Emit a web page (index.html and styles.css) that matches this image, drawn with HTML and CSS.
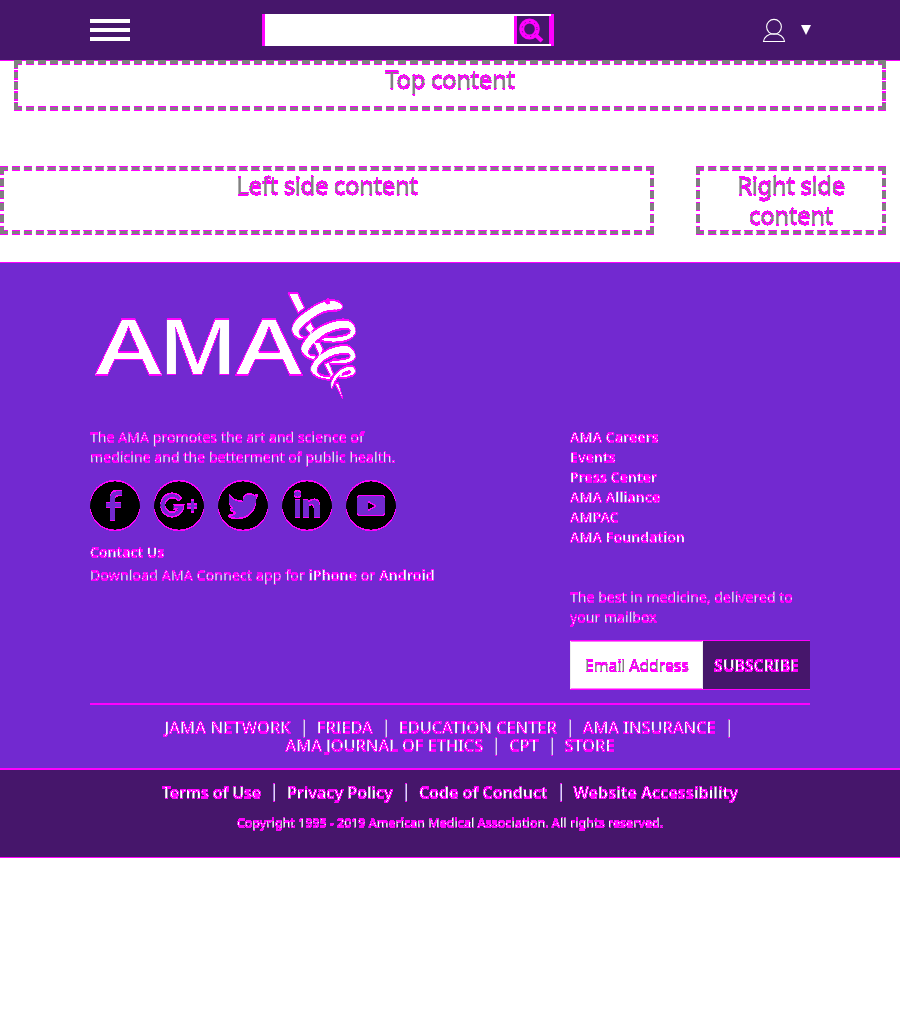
FILE: index.html
```html
<!DOCTYPE html>
<html lang="en">
<head>
<meta charset="utf-8">
<title>AMA</title>
<link rel="stylesheet" href="styles.css">
</head>
<body>
<svg class="defs" width="0" height="0" aria-hidden="true">
  <!-- Paints magenta wherever a pixel differs strongly from the one below it -->
  <filter id="edges" x="0" y="0" width="100%" height="100%" color-interpolation-filters="sRGB">
    <feOffset in="SourceGraphic" dy="-1" result="up"/>
    <feBlend in="SourceGraphic" in2="up" mode="difference" result="diff"/>
    <feColorMatrix in="diff" values="0 0 0 0 1  0 0 0 0 0  0 0 0 0 1  20 20 20 0 -3.5"  result="mark"/>
    <feMerge><feMergeNode in="SourceGraphic"/><feMergeNode in="mark"/></feMerge>
  </filter>
</svg>
<header class="header">
  <div class="burger"><span></span><span></span><span></span></div>
  <div class="search">
    <div class="search-button">
      <svg width="32" height="28" viewBox="0 0 32 28"><ellipse cx="12.500" cy="13" rx="7.800" ry="8" fill="none" stroke="#f0f" stroke-width="5"/><path d="M17.500 18l7.500 7" stroke="#f0f" stroke-width="4"/><circle cx="12.500" cy="13" r="7.500" fill="none" stroke="#46166b" stroke-width="1" stroke-dasharray="1 4"/></svg>
    </div>
  </div>
  <div class="user">
    <svg width="24" height="26" viewBox="0 0 24 26" fill="none" stroke="#fff" stroke-width="1.1"><circle cx="12" cy="8.8" r="7.4"/><path d="M1.500 23.500C2 19 6 15.800 12 15.800s10 3.200 10.500 7.700z"/></svg>
    <span class="caret"></span>
  </div>
</header>
<div class="page">
<main class="main">
  <div class="box top">Top content</div>
  <div class="row">
    <div class="box left">Left side content</div>
    <div class="box right">Right side content</div>
  </div>
</main>
<footer class="footer">
  <div class="inner">
    <svg class="logo" width="275" height="115" viewBox="90 288 275 115" fill="#fff">
      <text class="logo-text" y="375"><tspan x="95" textLength="67" lengthAdjust="spacingAndGlyphs">A</tspan><tspan x="159" textLength="78" lengthAdjust="spacingAndGlyphs">M</tspan><tspan x="235.500" textLength="67" lengthAdjust="spacingAndGlyphs">A</tspan></text>
      <g transform="translate(280 285.500) scale(.3333)" stroke="#fff" stroke-width="2">
        <path d="M25 24H52L73 68 55 84zM76 128L92 112 103 132 90 146zM102 174L118 170 130 196 118 210zM133 236L146 232 160 268 154 276zM166 296L174 294 187 338z"/>
        <path d="M186 68Q190 54 170 48 135 38 85 74 35 105 36 135 40 155 60 162L78 156Q62 158 56 142 58 130 95 101 130 75 165 76 182 76 186 68z"/>
        <path d="M226 140Q226 104 190 104 130 108 85 152 55 185 68 205 80 222 102 224L106 212Q90 214 84 202 90 180 125 155 165 128 205 132 216 136 208 145 185 160 135 155L120 166Q150 176 195 168 226 158 226 140z"/>
        <path d="M226 215Q222 180 190 180 150 184 115 212 88 240 94 260 104 280 150 284L152 274Q118 276 110 258 112 240 135 224 170 202 205 206 218 212 205 220 180 228 160 224L146 234Q175 240 205 234 226 226 226 215z"/>
        <path d="M155 310Q148 280 175 258 205 236 222 246 230 262 220 270 200 280 178 278L182 270Q205 270 214 260 205 254 190 264 165 280 160 300z"/>
        <circle cx="143" cy="49" r="6" fill="#f0f" stroke="#f0f"/>
      </g>
    </svg>
    <div class="columns">
      <div class="about">
        <p class="copy promo">The AMA promotes the art and science of<br>medicine and the betterment of public health.</p>
        <div class="social">
          <svg width="50" height="50"><circle cx="25" cy="25" r="25"/><path class="cut" d="M20 40V27h-4v-5h4v-4q0-8 7-8h5v5h-3q-4 0-4 3v4h6v5h-6v13z"/></svg>
          <svg width="50" height="50"><circle cx="25" cy="25" r="25"/><path d="M26 19a9.500 9.500 0 1 0 1.500 7.500h-8" fill="none" stroke="#7229d0" stroke-width="4.500"/><path class="cut" d="M33 23.500h4v-4h3v4h3v4h-3v4h-3v-4h-4z"/></svg>
          <svg width="50" height="50"><circle cx="25" cy="25" r="25"/><path class="cut" d="M11 14q5 7 14 7c-1-7 6-10 11-6l4-1-2 4c1 11-8 21-20 20q-5 0-8-3 5 0 8-3-5-1-6-4h3q-4-3-4-7z"/></svg>
          <svg width="50" height="50"><circle cx="25" cy="25" r="25"/><circle class="cut" cx="15.500" cy="13.500" r="3.500"/><path class="cut" d="M13 19h5v18h-5zM21 19h5v2q11-6 12 4v12h-6V27q-1-5-5-2v12h-6z"/></svg>
          <svg width="50" height="50"><circle cx="25" cy="25" r="25"/><rect class="cut" x="11" y="15" width="28" height="20" rx="3"/><path d="M22 21v9l8-4.500z"/></svg>
        </div>
        <p class="contact"><a>Contact Us</a></p>
        <p class="copy app">Download AMA Connect app for <a>iPhone</a> or <a>Android</a></p>
      </div>
      <div class="side">
        <ul class="links"><li><span>AMA Careers</span></li><li><span>Events</span></li><li><span>Press Center</span></li><li><span>AMA Alliance</span></li><li><span>AMPAC</span></li><li><span>AMA Foundation</span></li></ul>
        <p class="copy mail">The best in medicine, delivered to<br>your mailbox</p>
        <div class="subscribe"><div class="field">Email Address</div><div class="button">SUBSCRIBE</div></div>
      </div>
    </div>
    <div class="network">
      <div class="first"><span class="wide">JAMA NETWORK</span><i></i><span>FRIEDA</span><i></i><span>EDUCATION CENTER</span><i></i><span>AMA INSURANCE</span><i class="last"></i></div>
      <div><span>AMA JOURNAL OF ETHICS</span><i></i><span>CPT</span><i></i><span>STORE</span></div>
    </div>
  </div>
  <div class="legal">
    <div class="terms"><span class="tight">Terms of Use</span><i></i><span>Privacy Policy</span><i></i><span>Code of Conduct</span><i></i><span class="loose">Website Accessibility</span></div>
    <p class="copyright">Copyright 1995 - 2019 American Medical Association. All rights reserved.</p>
  </div>
</footer>
</div>
</body>
</html>
```
FILE: styles.css
```css
* { box-sizing: border-box; }
body { margin: 0; height: 1024px; overflow: hidden; background: #fff; font-family: "Noto Sans", "Open Sans", sans-serif; }
p, ul { margin: 0; padding: 0; list-style: none; }
.defs { position: absolute; }
.header { position: relative; z-index: 2; height: 60px; background: #46166b; display: flex; padding: 0 80px 0 90px; }
.header::after { content: ""; position: absolute; top: 60px; left: 0; width: 100%; height: 1px; background: linear-gradient(90deg, #f0f 14px, transparent 14px, transparent 886px, #f0f 886px), repeating-linear-gradient(90deg, #f0f 0 2px, #808080 2px 10px, #f0f 10px 12px); }
.burger { width: 40px; padding-top: 19px; display: flex; flex-direction: column; gap: 5px; }
.burger span { height: 4px; background: #fff; }
.search { flex: none; width: 292px; height: 32px; margin: 14px 0 0 132px; background: #fff; border: solid #f0f; border-width: 0 3px; display: flex; justify-content: flex-end; padding: 2px 0; }
.search-button { width: 37px; height: 28px; background: linear-gradient(#46166b, #46166b) content-box, #46166b; border: solid #f0f; border-width: 0 2px 0 3px; }
.user { margin: 18px 0 0 208px; display: flex; }
.caret { margin: 7px 0 0 15px; width: 0; height: 0; border: 5px solid transparent; border-top: 10px solid #fff; border-bottom: 0; }
.page { height: 1100px; filter: url(#edges); background: #fff; }
.main { height: 203px; padding-top: 1px; }
.box { border: 4px dashed #808080; color: #808080; font-size: 24px; line-height: 30px; text-align: center; letter-spacing: -.4px; -webkit-text-stroke: .3px #808080; }
.top { margin: 0 14px; height: 50px; }
.row { display: flex; justify-content: space-between; padding-right: 14px; margin-top: 56px; }
.left { width: 654px; height: 68px; }
.right { width: 190px; height: 68px; padding: 0 30px; }
.footer { background: #7229d0; height: 595px; color: #fff; }
.inner { width: 720px; margin: 0 auto; height: 506px; padding-top: 25px; }
.logo { display: block; }
.logo-text { font: 600 78px "Open Sans", sans-serif; }
.columns { display: flex; padding-top: 25px; height: 301px; }
.about { width: 480px; }
.side { width: 240px; }
.copy { font-size: 14px; line-height: 20px; color: #f0e8fa; letter-spacing: .07px; }
.copy a, .contact { color: #fff; font-weight: 600; }
.app { letter-spacing: .17px; }
.social { display: flex; gap: 14px; margin: 13px 0 12px; }
.cut { fill: #7229d0; }
.contact { font-size: 14px; line-height: 20px; margin-bottom: 3px; }
.links { font-size: 14px; line-height: 20px; font-weight: 600; letter-spacing: .1px; }
.mail { margin-top: 40px; letter-spacing: .05px; }
.subscribe { display: flex; height: 49px; margin-top: 13px; }
.field { width: 133px; border: 1px solid #eee; background: #fff; color: #808080; font-size: 16px; line-height: 48px; padding-left: 14px; letter-spacing: -.15px; white-space: nowrap; }
.button { width: 107px; background: #46166b; font-size: 15.800px; line-height: 50px; font-weight: 600; padding-left: 11px; }
.network { border-top: 1px solid #f0f; height: 65px; padding-top: 14px; font-size: 16.300px; line-height: 18px; font-weight: 500; }
.network div, .terms { display: flex; justify-content: center; white-space: nowrap; }
.network .first { padding-left: 6px; }
.network .last { margin-right: 12px; }
.wide { letter-spacing: .15px; }
.tight { letter-spacing: -.15px; }
.loose { letter-spacing: .12px; }
i { width: 2px; height: 18px; margin: 1px 12px -1px; background: linear-gradient(90deg, #9c74d6 50%, #e2d5f3 50%); }
.legal { background: #46166b; border-top: 1px solid #f0f; height: 89px; padding-top: 13px; }
.terms { font-size: 16px; line-height: 20px; font-weight: 600; }
.copyright { text-align: center; font-size: 12.400px; line-height: 20px; margin-top: 11px; font-weight: 500; }
```
